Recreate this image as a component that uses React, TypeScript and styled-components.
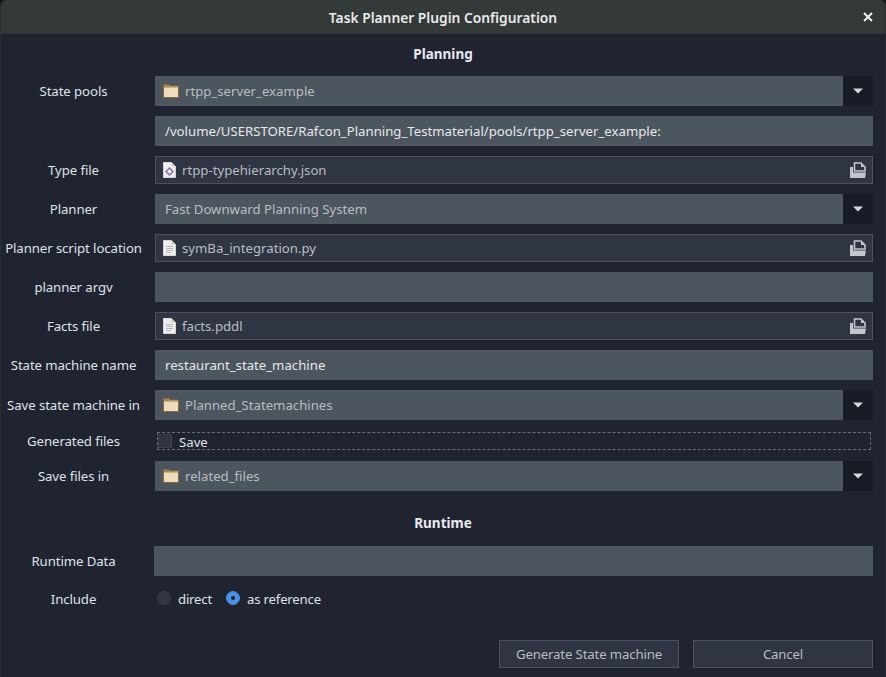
import React from "react";
import styled, { createGlobalStyle } from "styled-components";

const GlobalStyle = createGlobalStyle`
  html, body {
    margin: 0;
    padding: 0;
    background: #15171c;
  }
  body {
    font-family: "Noto Sans", "Liberation Sans", sans-serif;
    font-size: 13.2px;
  }
`;

const Window = styled.div`
  width: 886px;
  height: 677px;
  overflow: hidden;
  display: flex;
  flex-direction: column;
  background: #1f2430;
  border-radius: 6px 6px 0 0;
  box-sizing: border-box;
  border-left: 1px solid #2a2e38;
  border-right: 1px solid #2a2e38;
`;

const TitleBar = styled.div`
  height: 35px;
  flex: none;
  position: relative;
  display: flex;
  align-items: center;
  justify-content: center;
  background: #343a39;
  border-bottom: 1px solid #1b1f27;
  box-sizing: border-box;
  color: #e8eaea;
  font-weight: 600;
  font-size: 13.8px;
`;

const CloseButton = styled.svg`
  position: absolute;
  right: 12px;
  top: 12px;
  width: 10px;
  height: 10px;
`;

const Content = styled.div`
  flex: 1;
  display: flex;
  flex-direction: column;
  padding: 8px 12px 0 0;
`;

const Heading = styled.div<{ $top?: number; $bottom: number }>`
  height: 22px;
  line-height: 22px;
  margin-top: ${(p) => p.$top ?? 0}px;
  margin-bottom: ${(p) => p.$bottom}px;
  padding-left: 12px;
  text-align: center;
  color: #e8eaee;
  font-weight: 700;
  font-size: 13.5px;
`;

const Row = styled.div<{ $height?: number; $gap?: number }>`
  display: grid;
  grid-template-columns: 145px 1fr;
  grid-template-rows: ${(p) => p.$height ?? 30}px;
  column-gap: 9px;
  align-items: center;
  margin-bottom: ${(p) => p.$gap ?? 10}px;
`;

const Label = styled.div`
  text-align: center;
  color: #dfe2e6;
  white-space: nowrap;
  margin-top: -1px;
  letter-spacing: -0.08px;
`;

const Field = styled.div`
  height: 100%;
  display: flex;
  align-items: center;
  box-sizing: border-box;
  background: #4d555e;
  color: #e6e8ea;
  padding-left: 10px;
  white-space: nowrap;
`;

const WideField = styled(Field)`
  margin-left: -1px;
`;

const Combo = styled.div`
  height: 100%;
  display: flex;
`;

const ComboValue = styled.div`
  flex: 1;
  display: flex;
  align-items: center;
  gap: 6px;
  padding-left: 10px;
  background: #4d555e;
  color: #b9bdc2;
  &:has(svg) {
    padding-left: 8px;
  }
`;

const ComboArrow = styled.div`
  width: 30px;
  display: flex;
  align-items: center;
  justify-content: center;
  background: #191c26;
`;

const Chooser = styled.div`
  height: 100%;
  display: flex;
  align-items: center;
  gap: 6px;
  box-sizing: border-box;
  padding: 0 6px 0 7px;
  background: #2f3542;
  border: 1px solid #4c5360;
  color: #b9bdc2;
`;

const ChooserName = styled.span`
  flex: 1;
`;

const CheckRow = styled.div`
  height: 100%;
  display: flex;
  align-items: center;
  margin: 0 2px 0 2px;
  gap: 7px;
  border: 1px dashed #6a6f78;
  border-radius: 1px;
  box-sizing: border-box;
  color: #dfe2e6;
  line-height: 16px;
`;

const CheckBox = styled.div`
  width: 14px;
  height: 14px;
  background: #2f3542;
  border: 1px solid #3c424e;
  box-sizing: border-box;
`;

const CheckText = styled.span`
  margin-top: 1px;
`;

const RadioGroup = styled.div`
  display: flex;
  align-items: center;
  margin-left: 2px;
`;

const Radio = styled.div<{ $checked?: boolean }>`
  width: 14px;
  height: 14px;
  margin-top: -2px;
  border-radius: 50%;
  box-sizing: border-box;
  display: flex;
  align-items: center;
  justify-content: center;
  background: ${(p) => (p.$checked ? "#4a90e2" : "#2f3542")};
  border: 1px solid ${(p) => (p.$checked ? "#4a90e2" : "#3c424e")};
  &::after {
    content: "";
    display: ${(p) => (p.$checked ? "block" : "none")};
    width: 4px;
    height: 4px;
    border-radius: 50%;
    background: #1f2430;
  }
`;

const RadioText = styled.span<{ $gap: number }>`
  margin-left: 7px;
  margin-right: ${(p) => p.$gap}px;
  color: #dfe2e6;
  letter-spacing: -0.2px;
`;

const Footer = styled.div`
  display: flex;
  justify-content: flex-end;
  gap: 14px;
  margin-top: 27px;
`;

const Button = styled.div`
  width: 180px;
  height: 28px;
  display: flex;
  align-items: center;
  justify-content: center;
  box-sizing: border-box;
  background: #2f3542;
  border: 1px solid #4c5360;
  color: #b9bdc2;
  letter-spacing: -0.14px;
  padding-bottom: 1px;
`;

const Folder = () => (
  <svg width="16" height="16" viewBox="0 0 16 16">
    <path d="M.5 1.5 h5 l1.5 1.5 h8.5 v11.5 h-15 z" fill="#eddcbd" stroke="#8a6a3c" />
    <path d="M1 2 h4.3 l1.5 1.5 h8.2 v1 h-14 z" fill="#a5854f" />
  </svg>
);

const DocIcon = ({ json }: { json?: boolean }) => (
  <svg width="13" height="16" viewBox="0 0 13 16">
    <path d="M.5 .5 h8 l4 4 v11 h-12 z" fill="#efefef" stroke="#d5d5d5" />
    <path d="M8.5 .5 v4 h4" fill="#c9c9c9" />
    {json ? (
      <path d="M6.5 5 l4.5 4.5 -4.5 4.5 -4.5 -4.5 z M6.5 7 l-2.5 2.5 2.5 2.5 2.5 -2.5 z" fill="#8e6cc0" fillRule="evenodd" />
    ) : (
      <path d="M3 6.5 h7 M3 8.5 h7 M3 10.5 h7 M3 12.5 h5" stroke="#b5b5b5" />
    )}
  </svg>
);

const OpenIcon = () => (
  <svg width="16" height="16" viewBox="0 0 16 16">
    <path d="M4.5 1 h6.5 l4 4 v4 h-10.5 z" fill="none" stroke="#c3c6ca" strokeWidth="1.6" />
    <path d="M11 1 v4 h4 z" fill="#c3c6ca" />
    <path d="M0 5 h3 v5.5 h13 l-1 5.5 h-15 z" fill="#c3c6ca" />
  </svg>
);

const Caret = () => (
  <svg width="10" height="6" viewBox="0 0 10 6">
    <path d="M0 .5 h10 l-5 5 z" fill="#d6d8dc" />
  </svg>
);

const ComboField = ({ text, folder }: { text: string; folder?: boolean }) => (
  <Combo>
    <ComboValue>
      {folder && <Folder />}
      {text}
    </ComboValue>
    <ComboArrow>
      <Caret />
    </ComboArrow>
  </Combo>
);

const FileChooser = ({ name, json }: { name: string; json?: boolean }) => (
  <Chooser>
    <DocIcon json={json} />
    <ChooserName>{name}</ChooserName>
    <OpenIcon />
  </Chooser>
);

export default function App() {
  return (
    <>
      <GlobalStyle />
      <Window>
        <TitleBar>
          Task Planner Plugin Configuration
          <CloseButton viewBox="0 0 10 10">
            <path d="M1 1 L9 9 M9 1 L1 9" stroke="#f0f0f0" strokeWidth="2" />
          </CloseButton>
        </TitleBar>
        <Content>
          <Heading $bottom={11}>Planning</Heading>
          <Row>
            <Label>State pools</Label>
            <ComboField text="rtpp_server_example" folder />
          </Row>
          <Row>
            <span />
            <Field>/volume/USERSTORE/Rafcon_Planning_Testmaterial/pools/rtpp_server_example:</Field>
          </Row>
          <Row $height={28}>
            <Label>Type file</Label>
            <FileChooser name="rtpp-typehierarchy.json" json />
          </Row>
          <Row>
            <Label>Planner</Label>
            <ComboField text="Fast Downward Planning System" />
          </Row>
          <Row $height={28}>
            <Label>Planner script location</Label>
            <FileChooser name="symBa_integration.py" />
          </Row>
          <Row>
            <Label>planner argv</Label>
            <Field />
          </Row>
          <Row $height={28}>
            <Label>Facts file</Label>
            <FileChooser name="facts.pddl" />
          </Row>
          <Row>
            <Label>State machine name</Label>
            <Field>restaurant_state_machine</Field>
          </Row>
          <Row $gap={12}>
            <Label>Save state machine in</Label>
            <ComboField text="Planned_Statemachines" folder />
          </Row>
          <Row $height={18} $gap={11}>
            <Label>Generated files</Label>
            <CheckRow>
              <CheckBox />
              <CheckText>Save</CheckText>
            </CheckRow>
          </Row>
          <Row $gap={21}>
            <Label>Save files in</Label>
            <ComboField text="related_files" folder />
          </Row>
          <Heading $bottom={12}>Runtime</Heading>
          <Row $gap={9}>
            <Label>Runtime Data</Label>
            <WideField />
          </Row>
          <Row $height={28} $gap={0}>
            <Label>Include</Label>
            <RadioGroup>
              <Radio />
              <RadioText $gap={14}>direct</RadioText>
              <Radio $checked />
              <RadioText $gap={0}>as reference</RadioText>
            </RadioGroup>
          </Row>
          <Footer>
            <Button>Generate State machine</Button>
            <Button>Cancel</Button>
          </Footer>
        </Content>
      </Window>
    </>
  );
}
